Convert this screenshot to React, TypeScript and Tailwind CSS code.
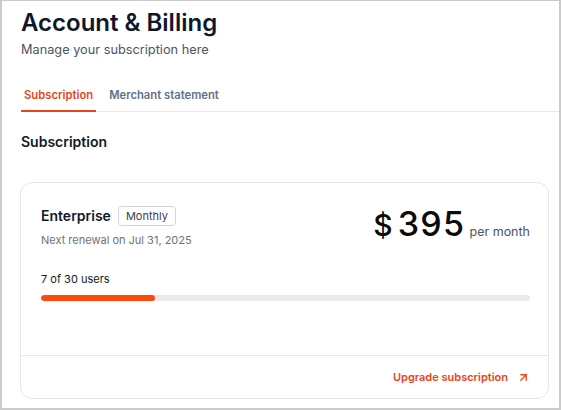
import { ArrowUpRight } from "lucide-react";

export default function App() {
  const used = 7;
  const total = 30;
  const pct = (used / total) * 100;

  return (
    <div className="w-[561px] h-[410px] overflow-hidden bg-white border-x-2 border-t border-b-2 border-[#cbcbcb] font-['Inter',sans-serif]">
      {/* header */}
      <div className="pl-[19px] pt-[6px]">
        <h1 className="text-[24px] leading-[32px] font-semibold text-[#0f172a]">
          Account &amp; Billing
        </h1>
        <p className="mt-[1px] text-[12.75px] leading-[20px] text-[#4b5563]">Manage your subscription here</p>
      </div>

      {/* tabs */}
      <div className="ml-[19px] mt-[20px] flex gap-[10px] border-b border-[#e5e7eb]">
        <button className="px-[3px] pt-[7px] pb-[7px] text-[11.25px] leading-[16px] font-semibold text-[#e9441a] border-b-2 border-[#e9441a] -mb-px">
          Subscription
        </button>
        <button className="px-[3px] pt-[7px] pb-[7px] text-[11.25px] leading-[16px] font-semibold text-[#64708a] border-b-2 border-transparent -mb-px">
          Merchant statement
        </button>
      </div>

      {/* section */}
      <div className="pl-[18px] pr-[10px]">
        <h2 className="ml-px mt-[20px] text-[14px] leading-[20px] font-semibold text-[#111827]">Subscription</h2>

        <div className="mt-[30px] rounded-xl border border-[#e5e7eb]">
          <div className="pt-[23px] pl-[20px] pr-[18px] pb-[54px]">
            <div className="flex justify-between">
              <div>
                <div className="flex items-center gap-[7px]">
                  <span className="text-[14px] leading-[20px] font-semibold text-[#111827]">Enterprise</span>
                  <span className="h-[20px] px-[7px] rounded-[4px] border border-[#d1d5db] text-[11px] leading-[18px] text-[#374151]">
                    Monthly
                  </span>
                </div>
                <div className="mt-[6px] text-[11px] leading-[16px] text-[#6b7280]">Next renewal on Jul 31, 2025</div>
              </div>

              <div className="flex items-baseline text-[#0a0a0a]">
                <span className="text-[30px] leading-[36px] font-medium mr-[5px]">$</span>
                <span className="text-[34px] leading-[36px] font-medium tracking-[0.04em]">395</span>
                <span className="ml-[4px] text-[12.5px] leading-[16px] text-[#4b5563]">per month</span>
              </div>
            </div>

            <div className="mt-[23px] text-[11px] leading-[16px] text-[#111827]">
              {used} of {total} users
            </div>
            <div className="mt-[8px] h-[6px] rounded-full bg-[#e9eaee] overflow-hidden">
              <div className="h-full rounded-full bg-[#ff4a0f]" style={{ width: `${pct}%` }} />
            </div>
          </div>

          <div className="border-t border-[#e5e7eb] h-[43px] flex items-center justify-end pr-[18px] gap-[9px]">
            <span className="text-[11px] leading-[16px] font-semibold text-[#e9441a]">Upgrade subscription</span>
            <ArrowUpRight className="w-[13px] h-[13px] text-[#e9441a]" strokeWidth={2.5} />
          </div>
        </div>
      </div>
    </div>
  );
}
